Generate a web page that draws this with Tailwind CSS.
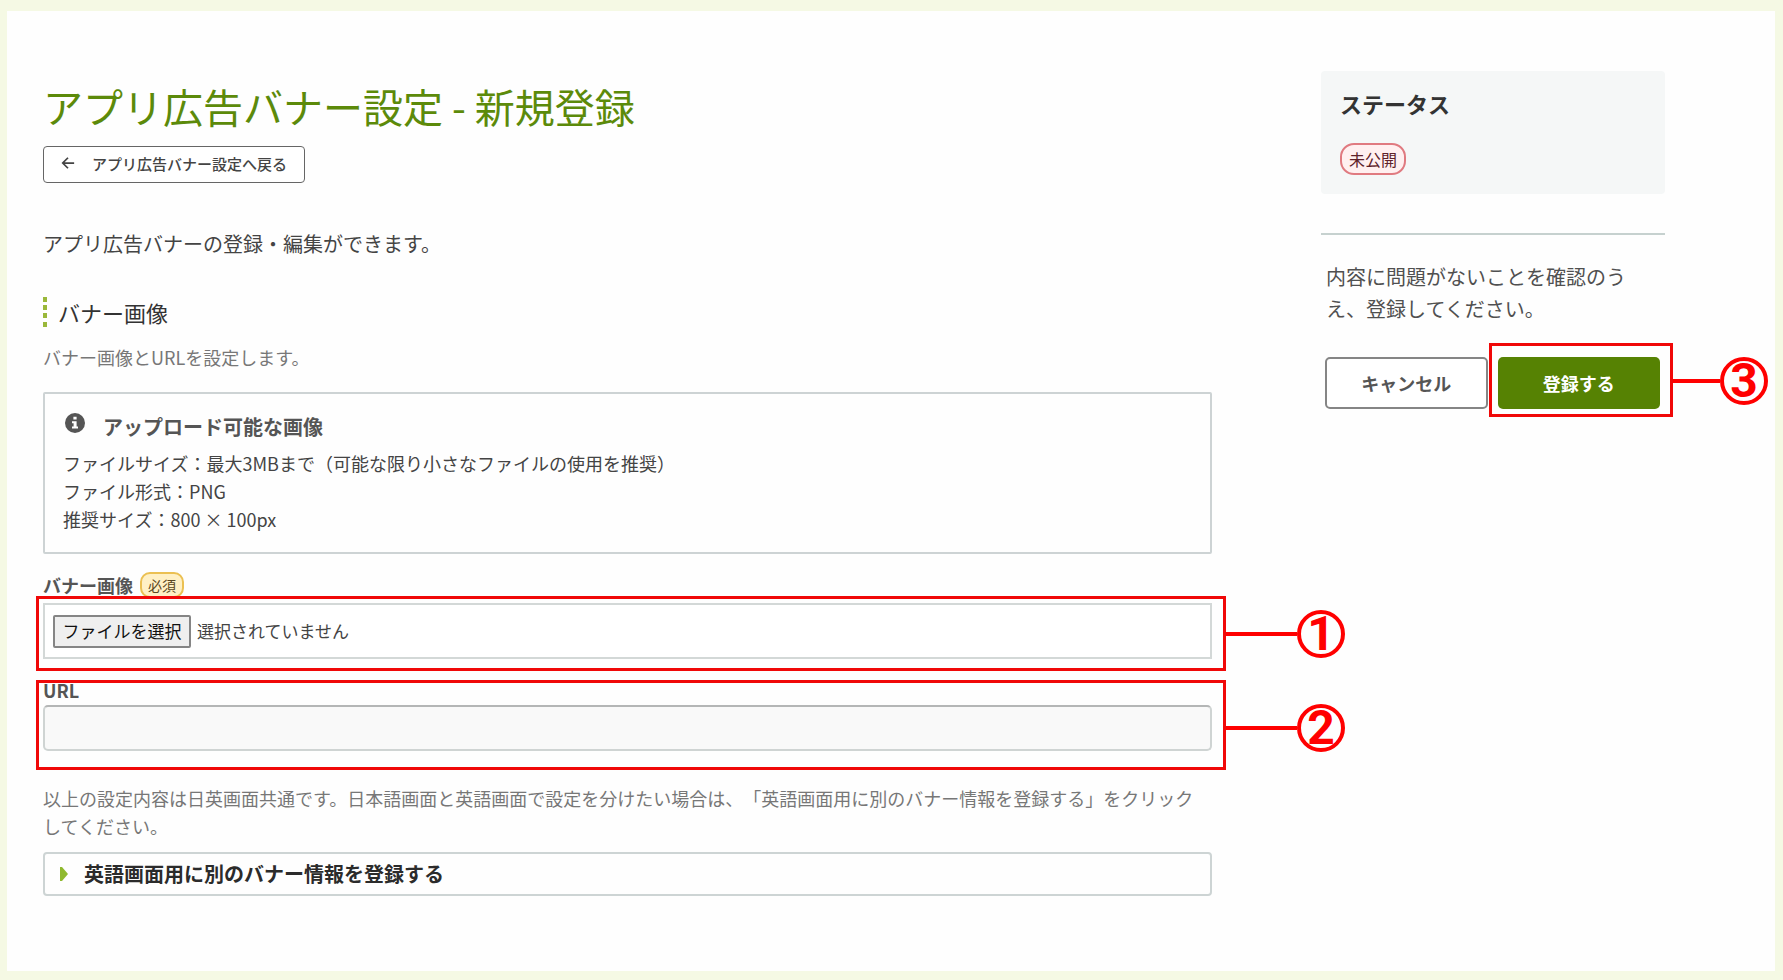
<!DOCTYPE html>
<html lang="ja">
<head>
  <meta charset="UTF-8" />
  <title>アプリ広告バナー設定 - 新規登録</title>
  <meta name="viewport" content="width=device-width, initial-scale=1" />
  <script src="https://cdn.jsdelivr.net/npm/@tailwindcss/browser@4"></script>
</head>
<body class="min-h-screen flex flex-col bg-[#f5f9e4] pt-[11px] pr-2 pb-[9px] pl-[7px] font-['Noto_Sans_CJK_JP',sans-serif] text-[#444] [text-spacing-trim:space-all]">

  <div class="flex-1 flex items-start gap-[109px] bg-[#fefefe] pt-[60px] pr-[110px] pb-10 pl-9">

    <!-- Main Content -->
    <main class="flex-1 min-w-0">
      <h1 class="text-[40px] leading-[70px] text-[#5c8a0a]">アプリ広告バナー設定 - 新規登録</h1>

      <a href="#" class="mt-[5px] w-fit h-[37px] px-[17px] flex items-center gap-[17px] rounded-[4px] border border-[#666] bg-white text-[15px] font-medium text-[#444]">
        <svg class="size-[14px] -mt-1" viewBox="0 0 16 16" fill="none" stroke="currentColor" stroke-width="2">
          <path d="M15 8H2M8 2L2 8l6 6" />
        </svg>
        アプリ広告バナー設定へ戻る
      </a>

      <p class="mt-[45px] text-[20px] leading-8">アプリ広告バナーの登録・編集ができます。</p>

      <!-- Section heading with dotted bar -->
      <h2 class="mt-[37px] flex items-center gap-[11px] text-[22px] leading-[30px] text-[#333]">
        <svg class="w-1 h-[30px]" viewBox="0 0 4 30" fill="#9ab83a">
          <rect width="4" height="5" /><rect y="8" width="4" height="5" /><rect y="16" width="4" height="5" /><rect y="25" width="4" height="5" />
        </svg>
        バナー画像
      </h2>
      <p class="mt-4 text-[18px] leading-7 text-[#777]">バナー画像とURLを設定します。</p>

      <!-- Upload info -->
      <section class="mt-[21px] rounded-[2px] border-2 border-[#cdd3d4] pt-[18px] pb-[19px] pl-[18px] pr-4">
        <h3 class="flex items-center gap-[18px] text-[20px] leading-[30px] font-bold text-[#555]">
          <svg class="ml-[2px] -mt-2 size-5" viewBox="0 0 20 20">
            <circle cx="10" cy="10" r="10" fill="#555" />
            <path fill="#fff" d="M8.4 3.8h3.2v2.8H8.4zM7 8.2h4.6v5.2H13v2H7v-2h1.6v-3.2H7z" />
          </svg>
          アップロード可能な画像
        </h3>
        <div class="mt-[7px] text-[18px] leading-7">
          <p>ファイルサイズ：最大3MBまで（可能な限り小さなファイルの使用を推奨）</p>
          <p>ファイル形式：PNG</p>
          <p>推奨サイズ：800 × 100px</p>
        </div>
      </section>

      <!-- Banner file -->
      <div class="mt-[18px] flex items-center gap-[7px] text-[18px] leading-[26px] font-bold text-[#555]">
        <label for="bannerFile">バナー画像</label>
        <span class="h-[26px] px-[6px] flex items-center rounded-[10px] border-2 border-[#ebc052] bg-[#fff0c4] text-[14px] font-normal text-[#5a4720]">必須</span>
      </div>
      <div class="relative mt-[5px]">
        <div class="h-14 px-2 flex items-center gap-[6px] border-2 border-[#d3d8d7] bg-white text-[17px]">
          <input id="bannerFile" type="file" class="sr-only" />
          <label for="bannerFile" class="h-[33px] w-[138px] flex items-center justify-center rounded-[2px] border-2 border-[#858585] bg-[#efefef] text-[#111]">ファイルを選択</label>
          <span>選択されていません</span>
        </div>
        <!-- Callout 1 -->
        <div class="absolute -top-[7px] -bottom-3 -left-[7px] -right-[14px] border-3 border-[#f00808] pointer-events-none"></div>
        <div class="absolute top-[7px] left-full ml-[14px] flex items-center pointer-events-none">
          <div class="w-[71px] h-1 bg-[#f00]"></div>
          <div class="size-12 flex items-center justify-center rounded-full border-4 border-[#f00] text-[48px] leading-none font-bold font-[Roboto,sans-serif] text-[#f00]">1</div>
        </div>
      </div>

      <!-- Banner URL -->
      <div class="relative mt-[19px]">
        <label for="bannerUrl" class="block text-[18px] leading-6 font-bold text-[#555]">URL</label>
        <input id="bannerUrl" type="text" class="mt-[3px] block w-full h-[46px] px-3 rounded-[5px] border-2 border-[#cfd4d3] border-t-[#b4b6b6] bg-[#f9f9f9] text-[18px]" />
        <!-- Callout 2 -->
        <div class="absolute top-[2px] -bottom-[19px] -left-[7px] -right-[14px] border-3 border-[#f00808] pointer-events-none"></div>
        <div class="absolute top-[26px] left-full ml-[14px] flex items-center pointer-events-none">
          <div class="w-[71px] h-1 bg-[#f00]"></div>
          <div class="size-12 flex items-center justify-center rounded-full border-4 border-[#f00] text-[48px] leading-none font-bold font-[Roboto,sans-serif] text-[#f00]">2</div>
        </div>
      </div>

      <p class="mt-[33px] pr-2 text-[18px] leading-7 text-[#777]">以上の設定内容は日英画面共通です。日本語画面と英語画面で設定を分けたい場合は、「英語画面用に別のバナー情報を登録する」をクリックしてください。</p>

      <details class="mt-3 rounded-[4px] border-2 border-[#cdd4d4]">
        <summary class="h-10 pl-[15px] flex items-center gap-4 text-[20px] font-bold text-[#2b2b2b] cursor-pointer">
          <svg class="w-2 h-[14px]" viewBox="0 0 8 14" fill="#8fb92f"><path d="M0 0h2l6 7-6 7H0z" /></svg>
          英語画面用に別のバナー情報を登録する
        </summary>
      </details>
    </main>

    <!-- Sidebar -->
    <aside class="w-[344px] shrink-0">
      <section class="rounded-[4px] bg-[#f5f7f7] pt-4 pb-[19px] px-[19px]">
        <h2 class="text-[22px] leading-8 font-bold text-[#333]">ステータス</h2>
        <span class="mt-6 w-fit h-8 px-[7px] flex items-center rounded-[14px] border-2 border-[#e07a80] bg-[#fff0f0] text-[16px] text-[#5e222a]">未公開</span>
      </section>

      <hr class="mt-[39px] border-t-2 border-[#c6d1cf]" />

      <p class="mt-[26px] ml-[5px] max-w-[312px] text-[20px] leading-8 text-[#505050]">内容に問題がないことを確認のうえ、登録してください。</p>

      <div class="mt-8 ml-1 mr-[5px] grid grid-cols-2 gap-[10px] text-[18px] font-bold">
        <button type="button" class="h-[52px] rounded-[5px] border-2 border-[#858585] bg-white text-[#555]">キャンセル</button>
        <div class="relative">
          <button type="submit" class="w-full h-[52px] rounded-[5px] bg-[#568203] text-white">登録する</button>
          <!-- Callout 3 -->
          <div class="absolute -top-[14px] -bottom-2 -left-[9px] -right-[13px] border-3 border-[#f00808] pointer-events-none"></div>
          <div class="absolute top-0 left-full ml-[13px] flex items-center pointer-events-none">
            <div class="w-[47px] h-1 bg-[#f00]"></div>
            <div class="size-12 flex items-center justify-center rounded-full border-4 border-[#f00] text-[48px] leading-none font-bold font-[Roboto,sans-serif] text-[#f00]">3</div>
          </div>
        </div>
      </div>
    </aside>
  </div>
</body>
</html>
